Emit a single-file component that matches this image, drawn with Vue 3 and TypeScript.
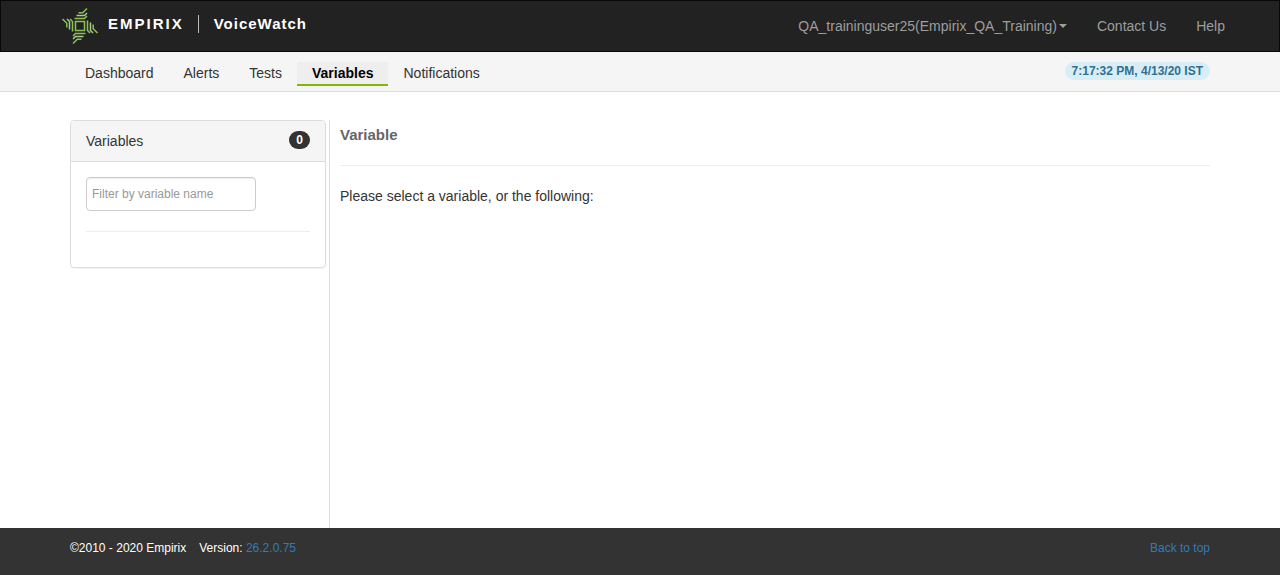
<script setup lang="ts">
import { ref } from 'vue'

interface NavItem {
  label: string
  href: string
}

const tabs: NavItem[] = [
  { label: 'Dashboard', href: '#dashboard' },
  { label: 'Alerts', href: '#alerts' },
  { label: 'Tests', href: '#tests' },
  { label: 'Variables', href: '#variables' },
  { label: 'Notifications', href: '#notifications' },
]
const activeTab = ref('Variables')
const variables = ref<string[]>([])
const filter = ref('')
const logoArms = [0, 90, 180, 270]
</script>

<template>
  <div id="top" class="page">
    <header class="navbar">
      <div class="container navbar-inner">
        <a class="brand" href="#dashboard">
          <svg class="logo" viewBox="0 0 36 36" aria-hidden="true">
            <rect x="13.5" y="13.5" width="9" height="9" />
            <g v-for="angle in logoArms" :key="angle" :transform="`rotate(${angle} 18 18)`">
              <path d="M12.5 10.5H22.5L25 8" />
              <path class="pale" d="M14.5 7.5H22.5L25 5" />
              <path d="M16.5 4.8H20.7L25 0.5" />
            </g>
          </svg>
          <span class="wordmark">
            <span class="company">EMPIRIX</span>
            <span class="product">VoiceWatch</span>
          </span>
        </a>
        <nav class="account" aria-label="Account">
          <button type="button" class="account-item" aria-haspopup="true">
            QA_traininguser25(Empirix_QA_Training)<span class="caret"></span>
          </button>
          <a class="account-item" href="#contact">Contact Us</a>
          <a class="account-item" href="#help">Help</a>
        </nav>
      </div>
    </header>

    <div class="subbar">
      <div class="container subbar-inner">
        <nav class="tabs" aria-label="Main">
          <a
            v-for="tab in tabs"
            :key="tab.label"
            :href="tab.href"
            class="tab"
            :class="{ active: tab.label === activeTab }"
            @click="activeTab = tab.label"
          >{{ tab.label }}</a>
        </nav>
        <time class="clock">7:17:32 PM, 4/13/20 IST</time>
      </div>
    </div>

    <main class="container content">
      <aside class="sidebar">
        <section class="panel">
          <div class="panel-heading">
            <span>Variables</span>
            <span class="badge">{{ variables.length }}</span>
          </div>
          <div class="panel-body">
            <input
              v-model="filter"
              class="filter"
              type="text"
              placeholder="Filter by variable name"
              aria-label="Filter by variable name"
            />
            <hr />
          </div>
        </section>
      </aside>
      <section class="detail">
        <h1>Variable</h1>
        <hr />
        <p>Please select a variable, or the following:</p>
      </section>
    </main>

    <footer class="footer">
      <div class="container footer-inner">
        <div class="release">
          <span>©2010 - 2020 Empirix</span>
          <span>Version: <a href="#version">26.2.0.75</a></span>
        </div>
        <a href="#top">Back to top</a>
      </div>
    </footer>
  </div>
</template>

<style>
body {
  margin: 0;
  background: #fff;
}
</style>

<style scoped>
.page,
.page * {
  box-sizing: border-box;
}

.page {
  display: flex;
  flex-direction: column;
  min-height: 100vh;
  color: #333;
  font-family: Arial, 'Liberation Sans', sans-serif;
  font-size: 14px;
  line-height: 20px;
}

.container {
  width: 100%;
  max-width: 1170px;
  margin: 0 auto;
  padding: 0 15px;
}

.navbar {
  background: #222;
  border: 1px solid #080808;
}

.navbar-inner {
  display: flex;
  justify-content: space-between;
  align-items: center;
  min-height: 50px;
  padding: 0 0 0 7px;
}

.brand {
  display: flex;
  align-items: center;
  color: #fff;
  font-size: 15px;
  font-weight: bold;
  line-height: 18px;
  text-decoration: none;
}

.logo {
  width: 36px;
  height: 36px;
  margin-right: 10px;
  overflow: visible;
  fill: none;
  stroke: #8cc152;
  stroke-width: 1.5;
}

.logo .pale {
  stroke: #a4cc92;
}

.wordmark {
  display: flex;
  padding-bottom: 4px;
}

.company {
  padding-right: 14px;
  border-right: 1px solid #bbb;
  letter-spacing: 2px;
}

.product {
  padding-left: 15px;
  letter-spacing: 1px;
}

.account {
  display: flex;
  gap: 30px;
}

.account-item {
  display: flex;
  align-items: center;
  padding: 0;
  border: 0;
  background: none;
  color: #9d9d9d;
  font: inherit;
  text-decoration: none;
}

.caret {
  margin-left: 2px;
  border-top: 4px solid;
  border-right: 4px solid transparent;
  border-left: 4px solid transparent;
}

.subbar {
  background: #f5f5f5;
  border-bottom: 1px solid #ddd;
}

.subbar-inner {
  display: flex;
  justify-content: space-between;
  align-items: flex-start;
  min-height: 39px;
  padding-top: 10px;
}

.tabs {
  display: flex;
}

.tab {
  padding: 1px 15px;
  border-bottom: 2px solid transparent;
  color: #333;
  text-decoration: none;
}

.tab.active {
  background: #eee;
  border-color: #80b900;
  color: #000;
  font-weight: bold;
}

.clock {
  padding: 0 7px;
  border-radius: 9px;
  background: #d9edf7;
  color: #31708f;
  font-size: 12px;
  font-weight: bold;
  line-height: 18px;
}

.content {
  display: flex;
  flex: 1;
  padding-top: 28px;
}

.sidebar {
  flex: 0 0 260px;
  padding-right: 3px;
  border-right: 1px solid #ddd;
}

.panel {
  border: 1px solid #ddd;
  border-radius: 4px;
  box-shadow: 0 1px 1px rgba(0, 0, 0, 0.05);
}

.panel-heading {
  display: flex;
  justify-content: space-between;
  align-items: flex-start;
  padding: 10px 15px;
  border-bottom: 1px solid #ddd;
  border-radius: 3px 3px 0 0;
  background: #f5f5f5;
}

.badge {
  padding: 0 7px;
  border-radius: 9px;
  background: #333;
  color: #fff;
  font-size: 12px;
  font-weight: bold;
  line-height: 18px;
}

.panel-body {
  padding: 15px;
}

.filter {
  display: block;
  width: 170px;
  height: 34px;
  padding: 6px 5px;
  border: 1px solid #ccc;
  border-radius: 4px;
  box-shadow: inset 0 1px 1px rgba(0, 0, 0, 0.075);
  color: #555;
  font-family: inherit;
  font-size: 12px;
}

.filter::placeholder {
  color: #999;
}

hr {
  margin: 20px 0;
  border: 0;
  border-top: 1px solid #eee;
}

.detail {
  flex: 1;
  padding-left: 10px;
}

.detail h1 {
  margin: 0;
  padding: 5px 0;
  color: #666;
  font-size: 15px;
  line-height: 20px;
}

.detail hr {
  margin: 15px 0 20px;
}

.detail p {
  margin: 0;
}

.footer {
  background: #333;
  color: #fff;
  font-size: 12px;
}

.footer-inner {
  display: flex;
  justify-content: space-between;
  min-height: 47px;
  padding-top: 10px;
}

.release {
  display: flex;
  gap: 13px;
}

.footer a {
  color: #337ab7;
  text-decoration: none;
}
</style>
